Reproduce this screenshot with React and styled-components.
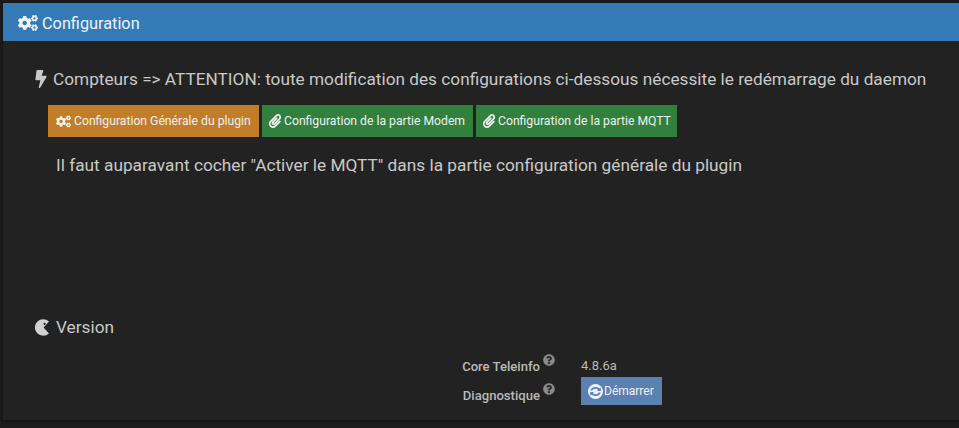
import styled, { createGlobalStyle } from 'styled-components';
import { FaBolt, FaCogs, FaPaperclip, FaQuestionCircle } from 'react-icons/fa';

const GlobalStyles = createGlobalStyle`
  * {
    box-sizing: border-box;
  }

  body {
    margin: 0;
    background-color: #1b1b1b;
    font-family: Roboto, "Liberation Sans", sans-serif;
    color: #c8c8c8;
  }
`;

const Page = styled.div`
  width: 959px;
  height: 428px;
  padding: 3px 0 8px 3px;
  overflow: hidden;
`;

const Panel = styled.div`
  height: 417px;
  display: flex;
  flex-direction: column;
  background-color: #222222;
  box-shadow: 0 1px 3px rgba(0, 0, 0, 0.4);
`;

const PanelHeader = styled.div`
  height: 38px;
  flex: none;
  display: flex;
  align-items: center;
  gap: 4px;
  padding: 2px 0 0 15px;
  background-color: #337ab7;
  color: #eef3f8;
  font-size: 16.3px;
`;

const PanelBody = styled.div`
  flex: 1;
  display: flex;
  flex-direction: column;
  padding: 27px 0 0 30px;
`;

const SectionTitle = styled.div`
  display: flex;
  align-items: center;
  gap: ${({ $gap }) => $gap}px;
  height: 22px;
  font-size: 17.24px;
  color: #c9c9c9;
  white-space: nowrap;
`;

const BoltIcon = styled(FaBolt)`
  margin-left: -1px;
`;

const ButtonRow = styled.div`
  display: flex;
  gap: 3px;
  margin: 15px 0 0 15px;
`;

const Button = styled.div`
  width: ${({ $width }) => $width}px;
  height: 32px;
  display: inline-flex;
  align-items: center;
  gap: 3px;
  padding-left: 8px;
  background-color: ${({ $bg }) => $bg};
  color: #eef0ee;
  font-size: 12.2px;
  white-space: nowrap;
`;

const ClipIcon = styled(FaPaperclip)`
  margin: 0 -1px 0 -2px;
`;

const Notice = styled.div`
  margin: 17px 0 0 23px;
  height: 22px;
  line-height: 22px;
  font-size: 17.28px;
  color: #c9c9c9;
`;

const VersionSection = styled.div`
  margin-top: 140px;
`;

const InfoGrid = styled.div`
  display: grid;
  grid-template-columns: 522px 1fr;
  column-gap: 26px;
  margin: 11px 0 0 0;
`;

const Label = styled.div`
  height: 28px;
  display: flex;
  justify-content: flex-end;
  align-items: flex-start;
  gap: 3px;
  padding-top: ${({ $top }) => $top}px;
  font-size: 13.1px;
  font-weight: 500;
  color: #b9b9b9;
`;

const HelpIcon = styled(FaQuestionCircle)`
  width: 12px;
  height: 12px;
  color: #8a8a8a;
  margin-top: -5px;
`;

const Value = styled.div`
  height: 28px;
  padding-top: 9px;
  font-size: 13px;
  color: #b9b9b9;
`;

const StartButton = styled.div`
  width: 81px;
  height: 28px;
  display: flex;
  align-items: center;
  gap: 1px;
  padding-left: 7px;
  background-color: #5b80b2;
  color: #eef1f5;
  font-size: 12px;
`;

const PacmanSvg = styled.svg`
  margin-left: 2px;
`;

const PacmanIcon = () => (
  <PacmanSvg width="15" height="17" viewBox="0 0 15 17" fill="#d0d0d0">
    <path d="M14 2.6 A8.3 8.3 0 1 0 14 14.4 L8.6 8.5 Z M9.6 3.7 a1.1 1.1 0 1 1 -0.01 0 Z" fillRule="evenodd" />
  </PacmanSvg>
);

const SyncIcon = () => (
  <svg width="15" height="15" viewBox="0 0 16 16" fill="#eef1f5">
    <path d="M8 0a8 8 0 1 1 0 16A8 8 0 0 1 8 0Z" />
    <path
      d="M2.5 7C3 4.6 5.2 3.2 8 3.2c1.7 0 3.1.6 4.1 1.6L13.6 3.6v3.8H9.7l1.2-1.3C10.2 5.4 9.2 5 8 5 6.3 5 5 5.8 4.5 7ZM13.5 9c-.5 2.4-2.7 3.8-5.5 3.8-1.7 0-3.1-.6-4.1-1.6l-1.5 1.2V8.6h3.9l-1.2 1.3c.7.7 1.7 1.1 2.9 1.1 1.7 0 3-.8 3.5-2Z"
      fill="#5b80b2"
    />
  </svg>
);

export default function App() {
  return (
    <>
      <GlobalStyles />
      <Page>
        <Panel>
          <PanelHeader>
            <FaCogs size={20} />
            Configuration
          </PanelHeader>
          <PanelBody>
            <SectionTitle $gap={3}>
              <BoltIcon size={18} />
              Compteurs =&gt; ATTENTION: toute modification des configurations ci-dessous nécessite le redémarrage du daemon
            </SectionTitle>
            <ButtonRow>
              <Button $bg="#c27d29" $width={211}>
                <FaCogs size={15} />
                Configuration Générale du plugin
              </Button>
              <Button $bg="#31803d" $width={211}>
                <ClipIcon size={14} />
                Configuration de la partie Modem
              </Button>
              <Button $bg="#31803d" $width={201}>
                <ClipIcon size={14} />
                Configuration de la partie MQTT
              </Button>
            </ButtonRow>
            <Notice>Il faut auparavant cocher "Activer le MQTT" dans la partie configuration générale du plugin</Notice>
            <VersionSection>
              <SectionTitle $gap={6}>
                <PacmanIcon />
                Version
              </SectionTitle>
              <InfoGrid>
                <Label $top={10}>
                  Core Teleinfo
                  <HelpIcon />
                </Label>
                <Value>4.8.6a</Value>
                <Label $top={11}>
                  Diagnostique
                  <HelpIcon />
                </Label>
                <StartButton>
                  <SyncIcon />
                  Démarrer
                </StartButton>
              </InfoGrid>
            </VersionSection>
          </PanelBody>
        </Panel>
      </Page>
    </>
  );
}
